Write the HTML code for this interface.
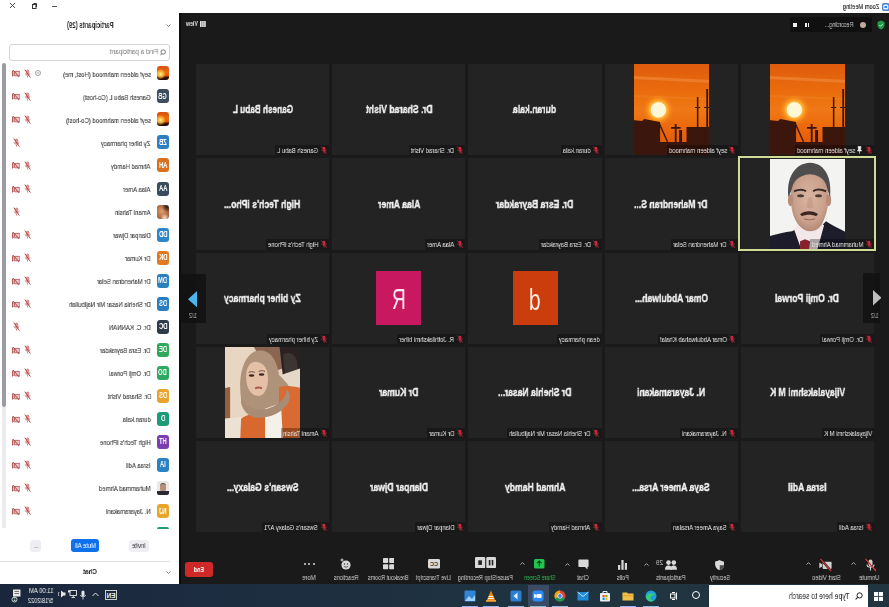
<!DOCTYPE html>
<html><head><meta charset="utf-8"><style>
html,body{margin:0;padding:0;overflow:hidden;}
body{width:889px;height:607px;overflow:hidden;position:relative;background:#fff;font-family:"Liberation Sans",sans-serif;}
#root{position:absolute;left:0;top:0;width:889px;height:607px;overflow:hidden;filter:blur(0.6px);}
#root>div,#root>svg{position:absolute;}
.t{white-space:nowrap;transform-origin:0 0;will-change:transform;}
</style></head><body><div id="root">
<div style="left:0px;top:0px;width:889px;height:13px;background:#fff"></div>
<div style="left:179px;top:13px;width:710px;height:571px;background:#1a1a1a"></div>
<div style="left:179px;top:13px;width:1.5px;height:571px;background:#0e0e0e"></div>
<div style="left:180.5px;top:40px;width:15.5px;height:502px;background:#1a1a1a"></div>
<div style="left:0px;top:13px;width:179px;height:571px;background:#fff"></div>
<div style="left:0px;top:584px;width:889px;height:23px;background:linear-gradient(to right,#1a263c 0,#1c2a40 120px,#1e3140 420px,#20353f 700px,#20353f 889px)"></div>
<div class="t" style="left:842.7px;top:2.73px;width:54.13px;font-size:8px;line-height:8px;color:#222;transform:matrix(-0.7099,0,0,1,36.3,0);-webkit-text-stroke:0.15px #222">Zoom Meeting</div>
<svg style="left:881.5px;top:2.5px;" width="7.5" height="8" viewBox="0 0 7.5 8"><rect x="0" y="0" width="7.5" height="8" rx="2" fill="#4a80d8"/><rect x="1.2" y="1.4" width="5.2" height="5.2" rx="1.5" fill="#e8f2ff"/><rect x="2.4" y="3" width="2.6" height="2" fill="#2d8cff"/></svg>
<svg style="left:10px;top:3px;" width="5" height="5" viewBox="0 0 5 5"><path d="M0 0L5 5M5 0L0 5" stroke="#333" stroke-width="0.9"/></svg>
<svg style="left:31.5px;top:2.5px;" width="5" height="6" viewBox="0 0 5 6"><rect x="0.5" y="1.5" width="3.5" height="4" fill="none" stroke="#333" stroke-width="1"/><path d="M1.5 0.5H4.5V4" fill="none" stroke="#333" stroke-width="1"/></svg>
<div style="left:52px;top:5.5px;width:5px;height:0.9px;background:#555"></div>
<div class="t" style="left:67px;top:21.17px;width:67.58px;font-size:8.3px;line-height:8.3px;color:#2a2a2a;font-weight:700;transform:matrix(-0.7216,0,0,1,46.6,0);">Participants (29)</div>
<svg style="left:166px;top:23.5px;" width="5" height="3" viewBox="0 0 5 3"><path d="M0.5 0.5L2.5 2.5L4.5 0.5" fill="none" stroke="#777" stroke-width="0.9"/></svg>
<div style="left:8.6px;top:43.5px;width:161px;height:17.3px;box-sizing:border-box;border:1px solid #d5d5d8;border-radius:3px;background:#fff"></div>
<svg style="left:159.5px;top:48.5px;" width="6" height="7" viewBox="0 0 6 7"><circle cx="3.2" cy="3" r="2.2" fill="none" stroke="#666" stroke-width="0.9"/><path d="M1.8 4.6L0.5 6.3" stroke="#666" stroke-width="0.9"/></svg>
<div class="t" style="left:109.8px;top:48.03px;width:64.37px;font-size:8px;line-height:8px;color:#777;transform:matrix(-0.7854,0,0,1,48.2,0);">Find a participant</div>
<div style="left:2px;top:407px;width:3.8px;height:121.4px;background:#ececee"></div>
<div style="left:2px;top:62.9px;width:3.8px;height:344.1px;background:#9b9ba2;border-radius:2px"></div>
<div style="left:157px;top:66.4px;width:11.5px;height:14px;border-radius:3px;background:radial-gradient(circle at 30% 58%,#fff0a0 0,#ffc040 18%,rgba(240,120,20,0) 45%),linear-gradient(to bottom,#d8520c 0,#ec6a10 45%,#e05a0c 68%,#3a1206 82%,#2a0e04 100%)"></div>
<div class="t" style="left:62.68px;top:70.93px;width:121.28px;font-size:8px;line-height:8px;color:#444;transform:matrix(-0.7450,0,0,1,88.12,0);-webkit-text-stroke:0.15px #444">seyf aldeen mahmood (Host, me)</div>
<svg style="left:11.8px;top:69.4px;" width="8.5" height="8.5" viewBox="0 0 8.5 8.5"><rect x="2.2" y="2.4" width="5.8" height="4.4" rx="0.5" fill="#eec0c0" stroke="#b45c5c" stroke-width="0.9"/><path d="M0.5 1.5V7.5" stroke="#b45c5c" stroke-width="1"/><path d="M0.9 2.2L2.2 3.4V5.8L0.9 6.8" fill="none" stroke="#b45c5c" stroke-width="0.7"/><path d="M1.2 1.2L7.2 8" stroke="#a04848" stroke-width="1"/></svg>
<svg style="left:23.5px;top:69.1px;" width="7" height="9" viewBox="0 0 7 9"><rect x="2.4" y="1" width="2.4" height="4.6" rx="1.2" fill="#e49a9a" stroke="#c86464" stroke-width="0.6"/><g fill="none" stroke="#c86464" stroke-width="0.8"><path d="M1.2 4.4C1.2 6.8 6 6.8 6 4.4M3.6 6.8V8.6"/><path d="M0.8 0.6L6.4 8.6" stroke="#b44c4c" stroke-width="1"/></g></svg>
<svg style="left:35px;top:70.4px;" width="6" height="6" viewBox="0 0 6 6"><circle cx="3" cy="3" r="2.5" fill="none" stroke="#888" stroke-width="0.8"/><path d="M1.8 3H4.2" stroke="#888" stroke-width="0.8"/></svg>
<div style="left:157px;top:89.42px;width:11.5px;height:14px;border-radius:3px;background:#3c4d5f"></div>
<div class="t" style="left:158.39px;top:92.17px;width:16.2px;font-size:8.8px;line-height:8.8px;color:#fff;font-weight:700;transform:matrix(-0.6600,0,0,1,8.71,0);">GB</div>
<div class="t" style="left:83.11px;top:93.95px;width:93.87px;font-size:8px;line-height:8px;color:#444;transform:matrix(-0.7450,0,0,1,67.69,0);-webkit-text-stroke:0.15px #444">Ganesh Babu L (Co-host)</div>
<svg style="left:11.8px;top:92.42px;" width="8.5" height="8.5" viewBox="0 0 8.5 8.5"><rect x="2.2" y="2.4" width="5.8" height="4.4" rx="0.5" fill="#eec0c0" stroke="#b45c5c" stroke-width="0.9"/><path d="M0.5 1.5V7.5" stroke="#b45c5c" stroke-width="1"/><path d="M0.9 2.2L2.2 3.4V5.8L0.9 6.8" fill="none" stroke="#b45c5c" stroke-width="0.7"/><path d="M1.2 1.2L7.2 8" stroke="#a04848" stroke-width="1"/></svg>
<svg style="left:23.5px;top:92.12px;" width="7" height="9" viewBox="0 0 7 9"><rect x="2.4" y="1" width="2.4" height="4.6" rx="1.2" fill="#e49a9a" stroke="#c86464" stroke-width="0.6"/><g fill="none" stroke="#c86464" stroke-width="0.8"><path d="M1.2 4.4C1.2 6.8 6 6.8 6 4.4M3.6 6.8V8.6"/><path d="M0.8 0.6L6.4 8.6" stroke="#b44c4c" stroke-width="1"/></g></svg>
<div style="left:157px;top:112.44px;width:11.5px;height:14px;border-radius:3px;background:radial-gradient(circle at 30% 58%,#fff0a0 0,#ffc040 18%,rgba(240,120,20,0) 45%),linear-gradient(to bottom,#d8520c 0,#ec6a10 45%,#e05a0c 68%,#3a1206 82%,#2a0e04 100%)"></div>
<div class="t" style="left:65.66px;top:116.97px;width:117.28px;font-size:8px;line-height:8px;color:#444;transform:matrix(-0.7450,0,0,1,85.14,0);-webkit-text-stroke:0.15px #444">seyf aldeen mahmood (Co-host)</div>
<svg style="left:11.8px;top:115.44px;" width="8.5" height="8.5" viewBox="0 0 8.5 8.5"><rect x="2.2" y="2.4" width="5.8" height="4.4" rx="0.5" fill="#eec0c0" stroke="#b45c5c" stroke-width="0.9"/><path d="M0.5 1.5V7.5" stroke="#b45c5c" stroke-width="1"/><path d="M0.9 2.2L2.2 3.4V5.8L0.9 6.8" fill="none" stroke="#b45c5c" stroke-width="0.7"/><path d="M1.2 1.2L7.2 8" stroke="#a04848" stroke-width="1"/></svg>
<svg style="left:23.5px;top:115.14px;" width="7" height="9" viewBox="0 0 7 9"><rect x="2.4" y="1" width="2.4" height="4.6" rx="1.2" fill="#e49a9a" stroke="#c86464" stroke-width="0.6"/><g fill="none" stroke="#c86464" stroke-width="0.8"><path d="M1.2 4.4C1.2 6.8 6 6.8 6 4.4M3.6 6.8V8.6"/><path d="M0.8 0.6L6.4 8.6" stroke="#b44c4c" stroke-width="1"/></g></svg>
<div style="left:157px;top:135.46px;width:11.5px;height:14px;border-radius:3px;background:#2e7fc2"></div>
<div class="t" style="left:158.88px;top:138.21px;width:14.73px;font-size:8.8px;line-height:8.8px;color:#fff;font-weight:700;transform:matrix(-0.6600,0,0,1,7.74,0);">ZB</div>
<div class="t" style="left:101.45px;top:139.99px;width:69.25px;font-size:8px;line-height:8px;color:#444;transform:matrix(-0.7450,0,0,1,49.35,0);-webkit-text-stroke:0.15px #444">Zy biher pharmacy</div>
<svg style="left:13px;top:138.16px;" width="7" height="9" viewBox="0 0 7 9"><rect x="2.4" y="1" width="2.4" height="4.6" rx="1.2" fill="#e49a9a" stroke="#c86464" stroke-width="0.6"/><g fill="none" stroke="#c86464" stroke-width="0.8"><path d="M1.2 4.4C1.2 6.8 6 6.8 6 4.4M3.6 6.8V8.6"/><path d="M0.8 0.6L6.4 8.6" stroke="#b44c4c" stroke-width="1"/></g></svg>
<div style="left:157px;top:158.48px;width:11.5px;height:14px;border-radius:3px;background:#d8701d"></div>
<div class="t" style="left:158.56px;top:161.23px;width:15.71px;font-size:8.8px;line-height:8.8px;color:#fff;font-weight:700;transform:matrix(-0.6600,0,0,1,8.39,0);">AH</div>
<div class="t" style="left:111.38px;top:163.01px;width:55.91px;font-size:8px;line-height:8px;color:#444;transform:matrix(-0.7450,0,0,1,39.42,0);-webkit-text-stroke:0.15px #444">Ahmad Hamdy</div>
<svg style="left:11.8px;top:161.48px;" width="8.5" height="8.5" viewBox="0 0 8.5 8.5"><rect x="2.2" y="2.4" width="5.8" height="4.4" rx="0.5" fill="#eec0c0" stroke="#b45c5c" stroke-width="0.9"/><path d="M0.5 1.5V7.5" stroke="#b45c5c" stroke-width="1"/><path d="M0.9 2.2L2.2 3.4V5.8L0.9 6.8" fill="none" stroke="#b45c5c" stroke-width="0.7"/><path d="M1.2 1.2L7.2 8" stroke="#a04848" stroke-width="1"/></svg>
<svg style="left:23.5px;top:161.18px;" width="7" height="9" viewBox="0 0 7 9"><rect x="2.4" y="1" width="2.4" height="4.6" rx="1.2" fill="#e49a9a" stroke="#c86464" stroke-width="0.6"/><g fill="none" stroke="#c86464" stroke-width="0.8"><path d="M1.2 4.4C1.2 6.8 6 6.8 6 4.4M3.6 6.8V8.6"/><path d="M0.8 0.6L6.4 8.6" stroke="#b44c4c" stroke-width="1"/></g></svg>
<div style="left:157px;top:181.5px;width:11.5px;height:14px;border-radius:3px;background:#3a4b5e"></div>
<div class="t" style="left:158.56px;top:184.25px;width:15.71px;font-size:8.8px;line-height:8.8px;color:#fff;font-weight:700;transform:matrix(-0.6600,0,0,1,8.39,0);">AA</div>
<div class="t" style="left:123.3px;top:186.03px;width:39.91px;font-size:8px;line-height:8px;color:#444;transform:matrix(-0.7450,0,0,1,27.5,0);-webkit-text-stroke:0.15px #444">Alaa Amer</div>
<svg style="left:11.8px;top:184.5px;" width="8.5" height="8.5" viewBox="0 0 8.5 8.5"><rect x="2.2" y="2.4" width="5.8" height="4.4" rx="0.5" fill="#eec0c0" stroke="#b45c5c" stroke-width="0.9"/><path d="M0.5 1.5V7.5" stroke="#b45c5c" stroke-width="1"/><path d="M0.9 2.2L2.2 3.4V5.8L0.9 6.8" fill="none" stroke="#b45c5c" stroke-width="0.7"/><path d="M1.2 1.2L7.2 8" stroke="#a04848" stroke-width="1"/></svg>
<svg style="left:23.5px;top:184.2px;" width="7" height="9" viewBox="0 0 7 9"><rect x="2.4" y="1" width="2.4" height="4.6" rx="1.2" fill="#e49a9a" stroke="#c86464" stroke-width="0.6"/><g fill="none" stroke="#c86464" stroke-width="0.8"><path d="M1.2 4.4C1.2 6.8 6 6.8 6 4.4M3.6 6.8V8.6"/><path d="M0.8 0.6L6.4 8.6" stroke="#b44c4c" stroke-width="1"/></g></svg>
<div style="left:157px;top:204.52px;width:11.5px;height:14px;border-radius:3px;background:radial-gradient(circle at 85% 12%,#2a1810 0,rgba(42,24,16,0) 35%),radial-gradient(circle at 65% 92%,#f8e0c8 0,rgba(248,224,200,0) 30%),radial-gradient(ellipse at 40% 45%,#e0a070 0,#b87248 50%,#8a4a30 100%)"></div>
<div class="t" style="left:115.13px;top:209.05px;width:50.88px;font-size:8px;line-height:8px;color:#444;transform:matrix(-0.7450,0,0,1,35.67,0);-webkit-text-stroke:0.15px #444">Amani Tahsin</div>
<svg style="left:13px;top:207.22px;" width="7" height="9" viewBox="0 0 7 9"><rect x="2.4" y="1" width="2.4" height="4.6" rx="1.2" fill="#e49a9a" stroke="#c86464" stroke-width="0.6"/><g fill="none" stroke="#c86464" stroke-width="0.8"><path d="M1.2 4.4C1.2 6.8 6 6.8 6 4.4M3.6 6.8V8.6"/><path d="M0.8 0.6L6.4 8.6" stroke="#b44c4c" stroke-width="1"/></g></svg>
<div style="left:157px;top:227.54px;width:11.5px;height:14px;border-radius:3px;background:#2d86c8"></div>
<div class="t" style="left:158.56px;top:230.29px;width:15.71px;font-size:8.8px;line-height:8.8px;color:#fff;font-weight:700;transform:matrix(-0.6600,0,0,1,8.39,0);">DD</div>
<div class="t" style="left:113.04px;top:232.07px;width:53.69px;font-size:8px;line-height:8px;color:#444;transform:matrix(-0.7450,0,0,1,37.76,0);-webkit-text-stroke:0.15px #444">Dlanpar Djwar</div>
<svg style="left:11.8px;top:230.54px;" width="8.5" height="8.5" viewBox="0 0 8.5 8.5"><rect x="2.2" y="2.4" width="5.8" height="4.4" rx="0.5" fill="#eec0c0" stroke="#b45c5c" stroke-width="0.9"/><path d="M0.5 1.5V7.5" stroke="#b45c5c" stroke-width="1"/><path d="M0.9 2.2L2.2 3.4V5.8L0.9 6.8" fill="none" stroke="#b45c5c" stroke-width="0.7"/><path d="M1.2 1.2L7.2 8" stroke="#a04848" stroke-width="1"/></svg>
<svg style="left:23.5px;top:230.24px;" width="7" height="9" viewBox="0 0 7 9"><rect x="2.4" y="1" width="2.4" height="4.6" rx="1.2" fill="#e49a9a" stroke="#c86464" stroke-width="0.6"/><g fill="none" stroke="#c86464" stroke-width="0.8"><path d="M1.2 4.4C1.2 6.8 6 6.8 6 4.4M3.6 6.8V8.6"/><path d="M0.8 0.6L6.4 8.6" stroke="#b44c4c" stroke-width="1"/></g></svg>
<div style="left:157px;top:250.56px;width:11.5px;height:14px;border-radius:3px;background:#df7a20"></div>
<div class="t" style="left:158.56px;top:253.31px;width:15.71px;font-size:8.8px;line-height:8.8px;color:#fff;font-weight:700;transform:matrix(-0.6600,0,0,1,8.39,0);">DK</div>
<div class="t" style="left:125.3px;top:255.09px;width:37.23px;font-size:8px;line-height:8px;color:#444;transform:matrix(-0.7450,0,0,1,25.5,0);-webkit-text-stroke:0.15px #444">Dr Kumar</div>
<svg style="left:11.8px;top:253.56px;" width="8.5" height="8.5" viewBox="0 0 8.5 8.5"><rect x="2.2" y="2.4" width="5.8" height="4.4" rx="0.5" fill="#eec0c0" stroke="#b45c5c" stroke-width="0.9"/><path d="M0.5 1.5V7.5" stroke="#b45c5c" stroke-width="1"/><path d="M0.9 2.2L2.2 3.4V5.8L0.9 6.8" fill="none" stroke="#b45c5c" stroke-width="0.7"/><path d="M1.2 1.2L7.2 8" stroke="#a04848" stroke-width="1"/></svg>
<svg style="left:23.5px;top:253.26px;" width="7" height="9" viewBox="0 0 7 9"><rect x="2.4" y="1" width="2.4" height="4.6" rx="1.2" fill="#e49a9a" stroke="#c86464" stroke-width="0.6"/><g fill="none" stroke="#c86464" stroke-width="0.8"><path d="M1.2 4.4C1.2 6.8 6 6.8 6 4.4M3.6 6.8V8.6"/><path d="M0.8 0.6L6.4 8.6" stroke="#b44c4c" stroke-width="1"/></g></svg>
<div style="left:157px;top:273.58px;width:11.5px;height:14px;border-radius:3px;background:#2b80c0"></div>
<div class="t" style="left:158.23px;top:276.33px;width:16.69px;font-size:8.8px;line-height:8.8px;color:#fff;font-weight:700;transform:matrix(-0.6600,0,0,1,9.03,0);">DM</div>
<div class="t" style="left:97.13px;top:278.11px;width:75.04px;font-size:8px;line-height:8px;color:#444;transform:matrix(-0.7450,0,0,1,53.67,0);-webkit-text-stroke:0.15px #444">Dr Mahendran Selar</div>
<svg style="left:11.8px;top:276.58px;" width="8.5" height="8.5" viewBox="0 0 8.5 8.5"><rect x="2.2" y="2.4" width="5.8" height="4.4" rx="0.5" fill="#eec0c0" stroke="#b45c5c" stroke-width="0.9"/><path d="M0.5 1.5V7.5" stroke="#b45c5c" stroke-width="1"/><path d="M0.9 2.2L2.2 3.4V5.8L0.9 6.8" fill="none" stroke="#b45c5c" stroke-width="0.7"/><path d="M1.2 1.2L7.2 8" stroke="#a04848" stroke-width="1"/></svg>
<svg style="left:23.5px;top:276.28px;" width="7" height="9" viewBox="0 0 7 9"><rect x="2.4" y="1" width="2.4" height="4.6" rx="1.2" fill="#e49a9a" stroke="#c86464" stroke-width="0.6"/><g fill="none" stroke="#c86464" stroke-width="0.8"><path d="M1.2 4.4C1.2 6.8 6 6.8 6 4.4M3.6 6.8V8.6"/><path d="M0.8 0.6L6.4 8.6" stroke="#b44c4c" stroke-width="1"/></g></svg>
<div style="left:157px;top:296.6px;width:11.5px;height:14px;border-radius:3px;background:#2a7ebf"></div>
<div class="t" style="left:158.72px;top:299.35px;width:15.23px;font-size:8.8px;line-height:8.8px;color:#fff;font-weight:700;transform:matrix(-0.6600,0,0,1,8.07,0);">DS</div>
<div class="t" style="left:68.98px;top:301.13px;width:112.82px;font-size:8px;line-height:8px;color:#444;transform:matrix(-0.7450,0,0,1,81.82,0);-webkit-text-stroke:0.15px #444">Dr Shehla Nasar Mir Najibullah</div>
<svg style="left:11.8px;top:299.6px;" width="8.5" height="8.5" viewBox="0 0 8.5 8.5"><rect x="2.2" y="2.4" width="5.8" height="4.4" rx="0.5" fill="#eec0c0" stroke="#b45c5c" stroke-width="0.9"/><path d="M0.5 1.5V7.5" stroke="#b45c5c" stroke-width="1"/><path d="M0.9 2.2L2.2 3.4V5.8L0.9 6.8" fill="none" stroke="#b45c5c" stroke-width="0.7"/><path d="M1.2 1.2L7.2 8" stroke="#a04848" stroke-width="1"/></svg>
<svg style="left:23.5px;top:299.3px;" width="7" height="9" viewBox="0 0 7 9"><rect x="2.4" y="1" width="2.4" height="4.6" rx="1.2" fill="#e49a9a" stroke="#c86464" stroke-width="0.6"/><g fill="none" stroke="#c86464" stroke-width="0.8"><path d="M1.2 4.4C1.2 6.8 6 6.8 6 4.4M3.6 6.8V8.6"/><path d="M0.8 0.6L6.4 8.6" stroke="#b44c4c" stroke-width="1"/></g></svg>
<div style="left:157px;top:319.62px;width:11.5px;height:14px;border-radius:3px;background:#2f3b49"></div>
<div class="t" style="left:158.56px;top:322.37px;width:15.71px;font-size:8.8px;line-height:8.8px;color:#fff;font-weight:700;transform:matrix(-0.6600,0,0,1,8.39,0);">DC</div>
<div class="t" style="left:109.07px;top:324.15px;width:59.01px;font-size:8px;line-height:8px;color:#444;transform:matrix(-0.7450,0,0,1,41.73,0);-webkit-text-stroke:0.15px #444">Dr. C. KANNAN</div>
<svg style="left:13px;top:322.32px;" width="7" height="9" viewBox="0 0 7 9"><rect x="2.4" y="1" width="2.4" height="4.6" rx="1.2" fill="#e49a9a" stroke="#c86464" stroke-width="0.6"/><g fill="none" stroke="#c86464" stroke-width="0.8"><path d="M1.2 4.4C1.2 6.8 6 6.8 6 4.4M3.6 6.8V8.6"/><path d="M0.8 0.6L6.4 8.6" stroke="#b44c4c" stroke-width="1"/></g></svg>
<div style="left:157px;top:342.64px;width:11.5px;height:14px;border-radius:3px;background:#2fa85b"></div>
<div class="t" style="left:158.72px;top:345.39px;width:15.23px;font-size:8.8px;line-height:8.8px;color:#fff;font-weight:700;transform:matrix(-0.6600,0,0,1,8.07,0);">DE</div>
<div class="t" style="left:100.45px;top:347.17px;width:70.58px;font-size:8px;line-height:8px;color:#444;transform:matrix(-0.7450,0,0,1,50.35,0);-webkit-text-stroke:0.15px #444">Dr. Esra Bayrakdar</div>
<svg style="left:11.8px;top:345.64px;" width="8.5" height="8.5" viewBox="0 0 8.5 8.5"><rect x="2.2" y="2.4" width="5.8" height="4.4" rx="0.5" fill="#eec0c0" stroke="#b45c5c" stroke-width="0.9"/><path d="M0.5 1.5V7.5" stroke="#b45c5c" stroke-width="1"/><path d="M0.9 2.2L2.2 3.4V5.8L0.9 6.8" fill="none" stroke="#b45c5c" stroke-width="0.7"/><path d="M1.2 1.2L7.2 8" stroke="#a04848" stroke-width="1"/></svg>
<svg style="left:23.5px;top:345.34px;" width="7" height="9" viewBox="0 0 7 9"><rect x="2.4" y="1" width="2.4" height="4.6" rx="1.2" fill="#e49a9a" stroke="#c86464" stroke-width="0.6"/><g fill="none" stroke="#c86464" stroke-width="0.8"><path d="M1.2 4.4C1.2 6.8 6 6.8 6 4.4M3.6 6.8V8.6"/><path d="M0.8 0.6L6.4 8.6" stroke="#b44c4c" stroke-width="1"/></g></svg>
<div style="left:157px;top:365.66px;width:11.5px;height:14px;border-radius:3px;background:#2fa95f"></div>
<div class="t" style="left:158.39px;top:368.41px;width:16.2px;font-size:8.8px;line-height:8.8px;color:#fff;font-weight:700;transform:matrix(-0.6600,0,0,1,8.71,0);">DO</div>
<div class="t" style="left:109.4px;top:370.19px;width:58.56px;font-size:8px;line-height:8px;color:#444;transform:matrix(-0.7450,0,0,1,41.4,0);-webkit-text-stroke:0.15px #444">Dr. Omji Porwal</div>
<svg style="left:11.8px;top:368.66px;" width="8.5" height="8.5" viewBox="0 0 8.5 8.5"><rect x="2.2" y="2.4" width="5.8" height="4.4" rx="0.5" fill="#eec0c0" stroke="#b45c5c" stroke-width="0.9"/><path d="M0.5 1.5V7.5" stroke="#b45c5c" stroke-width="1"/><path d="M0.9 2.2L2.2 3.4V5.8L0.9 6.8" fill="none" stroke="#b45c5c" stroke-width="0.7"/><path d="M1.2 1.2L7.2 8" stroke="#a04848" stroke-width="1"/></svg>
<svg style="left:23.5px;top:368.36px;" width="7" height="9" viewBox="0 0 7 9"><rect x="2.4" y="1" width="2.4" height="4.6" rx="1.2" fill="#e49a9a" stroke="#c86464" stroke-width="0.6"/><g fill="none" stroke="#c86464" stroke-width="0.8"><path d="M1.2 4.4C1.2 6.8 6 6.8 6 4.4M3.6 6.8V8.6"/><path d="M0.8 0.6L6.4 8.6" stroke="#b44c4c" stroke-width="1"/></g></svg>
<div style="left:157px;top:388.68px;width:11.5px;height:14px;border-radius:3px;background:#e8a52b"></div>
<div class="t" style="left:158.72px;top:391.43px;width:15.23px;font-size:8.8px;line-height:8.8px;color:#fff;font-weight:700;transform:matrix(-0.6600,0,0,1,8.07,0);">DS</div>
<div class="t" style="left:107.51px;top:393.21px;width:61.11px;font-size:8px;line-height:8px;color:#444;transform:matrix(-0.7450,0,0,1,43.29,0);-webkit-text-stroke:0.15px #444">Dr. Sharad Visht</div>
<svg style="left:11.8px;top:391.68px;" width="8.5" height="8.5" viewBox="0 0 8.5 8.5"><rect x="2.2" y="2.4" width="5.8" height="4.4" rx="0.5" fill="#eec0c0" stroke="#b45c5c" stroke-width="0.9"/><path d="M0.5 1.5V7.5" stroke="#b45c5c" stroke-width="1"/><path d="M0.9 2.2L2.2 3.4V5.8L0.9 6.8" fill="none" stroke="#b45c5c" stroke-width="0.7"/><path d="M1.2 1.2L7.2 8" stroke="#a04848" stroke-width="1"/></svg>
<svg style="left:23.5px;top:391.38px;" width="7" height="9" viewBox="0 0 7 9"><rect x="2.4" y="1" width="2.4" height="4.6" rx="1.2" fill="#e49a9a" stroke="#c86464" stroke-width="0.6"/><g fill="none" stroke="#c86464" stroke-width="0.8"><path d="M1.2 4.4C1.2 6.8 6 6.8 6 4.4M3.6 6.8V8.6"/><path d="M0.8 0.6L6.4 8.6" stroke="#b44c4c" stroke-width="1"/></g></svg>
<div style="left:157px;top:411.7px;width:11.5px;height:14px;border-radius:3px;background:#1e9b79"></div>
<div class="t" style="left:160.65px;top:414.45px;width:9.36px;font-size:8.8px;line-height:8.8px;color:#fff;font-weight:700;transform:matrix(-0.6600,0,0,1,4.19,0);">D</div>
<div class="t" style="left:122.97px;top:416.23px;width:40.36px;font-size:8px;line-height:8px;color:#444;transform:matrix(-0.7450,0,0,1,27.83,0);-webkit-text-stroke:0.15px #444">duran.kala</div>
<svg style="left:11.8px;top:414.7px;" width="8.5" height="8.5" viewBox="0 0 8.5 8.5"><rect x="2.2" y="2.4" width="5.8" height="4.4" rx="0.5" fill="#eec0c0" stroke="#b45c5c" stroke-width="0.9"/><path d="M0.5 1.5V7.5" stroke="#b45c5c" stroke-width="1"/><path d="M0.9 2.2L2.2 3.4V5.8L0.9 6.8" fill="none" stroke="#b45c5c" stroke-width="0.7"/><path d="M1.2 1.2L7.2 8" stroke="#a04848" stroke-width="1"/></svg>
<svg style="left:23.5px;top:414.4px;" width="7" height="9" viewBox="0 0 7 9"><rect x="2.4" y="1" width="2.4" height="4.6" rx="1.2" fill="#e49a9a" stroke="#c86464" stroke-width="0.6"/><g fill="none" stroke="#c86464" stroke-width="0.8"><path d="M1.2 4.4C1.2 6.8 6 6.8 6 4.4M3.6 6.8V8.6"/><path d="M0.8 0.6L6.4 8.6" stroke="#b44c4c" stroke-width="1"/></g></svg>
<div style="left:157px;top:434.72px;width:11.5px;height:14px;border-radius:3px;background:#7a3eaf"></div>
<div class="t" style="left:158.88px;top:437.47px;width:14.73px;font-size:8.8px;line-height:8.8px;color:#fff;font-weight:700;transform:matrix(-0.6600,0,0,1,7.74,0);">HT</div>
<div class="t" style="left:100.07px;top:439.25px;width:71.09px;font-size:8px;line-height:8px;color:#444;transform:matrix(-0.7450,0,0,1,50.73,0);-webkit-text-stroke:0.15px #444">High Tech's iPhone</div>
<svg style="left:11.8px;top:437.72px;" width="8.5" height="8.5" viewBox="0 0 8.5 8.5"><rect x="2.2" y="2.4" width="5.8" height="4.4" rx="0.5" fill="#eec0c0" stroke="#b45c5c" stroke-width="0.9"/><path d="M0.5 1.5V7.5" stroke="#b45c5c" stroke-width="1"/><path d="M0.9 2.2L2.2 3.4V5.8L0.9 6.8" fill="none" stroke="#b45c5c" stroke-width="0.7"/><path d="M1.2 1.2L7.2 8" stroke="#a04848" stroke-width="1"/></svg>
<svg style="left:23.5px;top:437.42px;" width="7" height="9" viewBox="0 0 7 9"><rect x="2.4" y="1" width="2.4" height="4.6" rx="1.2" fill="#e49a9a" stroke="#c86464" stroke-width="0.6"/><g fill="none" stroke="#c86464" stroke-width="0.8"><path d="M1.2 4.4C1.2 6.8 6 6.8 6 4.4M3.6 6.8V8.6"/><path d="M0.8 0.6L6.4 8.6" stroke="#b44c4c" stroke-width="1"/></g></svg>
<div style="left:157px;top:457.74px;width:11.5px;height:14px;border-radius:3px;background:#2b81c1"></div>
<div class="t" style="left:159.85px;top:460.49px;width:11.8px;font-size:8.8px;line-height:8.8px;color:#fff;font-weight:700;transform:matrix(-0.6600,0,0,1,5.81,0);">IA</div>
<div class="t" style="left:126.28px;top:462.27px;width:35.91px;font-size:8px;line-height:8px;color:#444;transform:matrix(-0.7450,0,0,1,24.52,0);-webkit-text-stroke:0.15px #444">Israa Adil</div>
<svg style="left:11.8px;top:460.74px;" width="8.5" height="8.5" viewBox="0 0 8.5 8.5"><rect x="2.2" y="2.4" width="5.8" height="4.4" rx="0.5" fill="#eec0c0" stroke="#b45c5c" stroke-width="0.9"/><path d="M0.5 1.5V7.5" stroke="#b45c5c" stroke-width="1"/><path d="M0.9 2.2L2.2 3.4V5.8L0.9 6.8" fill="none" stroke="#b45c5c" stroke-width="0.7"/><path d="M1.2 1.2L7.2 8" stroke="#a04848" stroke-width="1"/></svg>
<svg style="left:23.5px;top:460.44px;" width="7" height="9" viewBox="0 0 7 9"><rect x="2.4" y="1" width="2.4" height="4.6" rx="1.2" fill="#e49a9a" stroke="#c86464" stroke-width="0.6"/><g fill="none" stroke="#c86464" stroke-width="0.8"><path d="M1.2 4.4C1.2 6.8 6 6.8 6 4.4M3.6 6.8V8.6"/><path d="M0.8 0.6L6.4 8.6" stroke="#b44c4c" stroke-width="1"/></g></svg>
<div style="left:157px;top:480.76px;width:11.5px;height:14px;border-radius:2px;background:#e8e8e8;overflow:hidden"><div style="position:absolute;left:3px;top:2px;width:6px;height:8px;border-radius:3px;background:#b98f78;border-top:1.5px solid #555"></div><div style="position:absolute;left:0;top:10px;width:11.5px;height:4px;background:#2a2a36"></div></div>
<div class="t" style="left:99.12px;top:485.29px;width:72.37px;font-size:8px;line-height:8px;color:#444;transform:matrix(-0.7450,0,0,1,51.68,0);-webkit-text-stroke:0.15px #444">Muhammad Ahmed</div>
<svg style="left:11.8px;top:483.76px;" width="8.5" height="8.5" viewBox="0 0 8.5 8.5"><rect x="2.2" y="2.4" width="5.8" height="4.4" rx="0.5" fill="#eec0c0" stroke="#b45c5c" stroke-width="0.9"/><path d="M0.5 1.5V7.5" stroke="#b45c5c" stroke-width="1"/><path d="M0.9 2.2L2.2 3.4V5.8L0.9 6.8" fill="none" stroke="#b45c5c" stroke-width="0.7"/><path d="M1.2 1.2L7.2 8" stroke="#a04848" stroke-width="1"/></svg>
<svg style="left:23.5px;top:483.46px;" width="7" height="9" viewBox="0 0 7 9"><rect x="2.4" y="1" width="2.4" height="4.6" rx="1.2" fill="#e49a9a" stroke="#c86464" stroke-width="0.6"/><g fill="none" stroke="#c86464" stroke-width="0.8"><path d="M1.2 4.4C1.2 6.8 6 6.8 6 4.4M3.6 6.8V8.6"/><path d="M0.8 0.6L6.4 8.6" stroke="#b44c4c" stroke-width="1"/></g></svg>
<div style="left:157px;top:503.78px;width:11.5px;height:14px;border-radius:3px;background:#e8a52b"></div>
<div class="t" style="left:159.04px;top:506.53px;width:14.25px;font-size:8.8px;line-height:8.8px;color:#fff;font-weight:700;transform:matrix(-0.6600,0,0,1,7.42,0);">NJ</div>
<div class="t" style="left:106.08px;top:508.31px;width:63.02px;font-size:8px;line-height:8px;color:#444;transform:matrix(-0.7450,0,0,1,44.72,0);-webkit-text-stroke:0.15px #444">N. Jayaramakani</div>
<svg style="left:11.8px;top:506.78px;" width="8.5" height="8.5" viewBox="0 0 8.5 8.5"><rect x="2.2" y="2.4" width="5.8" height="4.4" rx="0.5" fill="#eec0c0" stroke="#b45c5c" stroke-width="0.9"/><path d="M0.5 1.5V7.5" stroke="#b45c5c" stroke-width="1"/><path d="M0.9 2.2L2.2 3.4V5.8L0.9 6.8" fill="none" stroke="#b45c5c" stroke-width="0.7"/><path d="M1.2 1.2L7.2 8" stroke="#a04848" stroke-width="1"/></svg>
<svg style="left:23.5px;top:506.48px;" width="7" height="9" viewBox="0 0 7 9"><rect x="2.4" y="1" width="2.4" height="4.6" rx="1.2" fill="#e49a9a" stroke="#c86464" stroke-width="0.6"/><g fill="none" stroke="#c86464" stroke-width="0.8"><path d="M1.2 4.4C1.2 6.8 6 6.8 6 4.4M3.6 6.8V8.6"/><path d="M0.8 0.6L6.4 8.6" stroke="#b44c4c" stroke-width="1"/></g></svg>
<div style="left:157px;top:527px;width:11.5px;height:1.5px;background:#1e9b79;border-radius:3px 3px 0 0"></div>
<div style="left:30.4px;top:539.5px;width:11.1px;height:12.2px;background:#eeeef2;border-radius:3px"></div>
<div class="t" style="left:33.67px;top:542.07px;width:8.83px;font-size:7px;line-height:7px;color:#555;transform:matrix(-0.8000,0,0,1,4.67,0);">...</div>
<div style="left:70.9px;top:539px;width:28.3px;height:12.7px;background:#0e71eb;border-radius:3px"></div>
<div class="t" style="left:74.5px;top:542.27px;width:27.9px;font-size:7px;line-height:7px;color:#fff;transform:matrix(-0.8433,0,0,1,21,0);">Mute All</div>
<div style="left:128.6px;top:539.5px;width:20.8px;height:12.2px;background:#efeff3;border-radius:3px"></div>
<div class="t" style="left:132.25px;top:542.27px;width:19.73px;font-size:7px;line-height:7px;color:#333;transform:matrix(-0.8069,0,0,1,13.5,0);">Invite</div>
<div style="left:0px;top:560.5px;width:170px;height:0.8px;background:#e3e3e6"></div>
<div class="t" style="left:83px;top:568.23px;width:20.78px;font-size:8px;line-height:8px;color:#222;font-weight:700;transform:matrix(-0.7875,0,0,1,14,0);">Chat</div>
<svg style="left:165.5px;top:570.5px;" width="5" height="3" viewBox="0 0 5 3"><path d="M0.5 0.5L2.5 2.5L4.5 0.5" fill="none" stroke="#777" stroke-width="0.9"/></svg>
<div class="t" style="left:185.8px;top:21.24px;width:18.37px;font-size:6.8px;line-height:6.8px;color:#e0e0e0;font-weight:700;transform:matrix(-0.7806,0,0,1,12,0);">View</div>
<svg style="left:199.8px;top:21px;" width="5.8" height="6" viewBox="0 0 5.8 6"><g fill="#e6e6e6"><rect x="0" y="0" width="1.6" height="6"/><rect x="2.1" y="0" width="1.6" height="6"/><rect x="4.2" y="0" width="1.6" height="6"/></g></svg>
<div style="left:789.8px;top:17.4px;width:82px;height:14.2px;background:#101010"></div>
<div style="left:793px;top:22.5px;width:4px;height:4.2px;background:#eee"></div>
<div style="left:805px;top:22.5px;width:1.5px;height:4.2px;background:#eee"></div>
<div style="left:807.6px;top:22.5px;width:1.5px;height:4.2px;background:#eee"></div>
<div class="t" style="left:824.6px;top:21.15px;width:43.44px;font-size:7.5px;line-height:7.5px;color:#ccc;transform:matrix(-0.7023,0,0,1,28.4,0);">Recording...</div>
<div style="left:859.5px;top:21.8px;width:6px;height:6px;border-radius:50%;background:#bfa8a0"></div>
<svg style="left:876.5px;top:19.5px;" width="8" height="10" viewBox="0 0 8 10"><path d="M4 0.5L7.5 2V5C7.5 7.5 5.5 9 4 9.5C2.5 9 0.5 7.5 0.5 5V2Z" fill="#1f9c45"/><path d="M2.3 5L3.6 6.3L5.9 3.8" fill="none" stroke="#bff5c8" stroke-width="0.9"/></svg>
<div style="left:196px;top:64px;width:133.2px;height:91.3px;background:#232323"></div>
<div class="t" style="left:232.55px;top:104.34px;width:83.68px;font-size:11px;line-height:11px;color:#f2f2f2;font-weight:700;transform:matrix(-0.7450,0,0,1,60.11,0);-webkit-text-stroke:0.35px #f2f2f2">Ganesh Babu L</div>
<div style="left:275.06px;top:145px;width:54.14px;height:10.3px;background:rgba(0,0,0,0.3)"></div>
<svg style="left:320.7px;top:146.1px;" width="6" height="8" viewBox="0 0 6 8"><rect x="1.8" y="0.8" width="2.6" height="4.4" rx="1.3" fill="#c42c3c"/><g fill="none" stroke="#b82838" stroke-width="1"><path d="M0.8 3.6C0.8 6 5.2 6 5.2 3.6M3 6V7.6"/><path d="M0.5 0.6L5.5 7.6"/></g></svg>
<div class="t" style="left:277.06px;top:147.03px;width:58.6px;font-size:8px;line-height:8px;color:#e6e6e6;transform:matrix(-0.7400,0,0,1,41.14,0);">Ganesh Babu L</div>
<div style="left:332.2px;top:64px;width:133.2px;height:91.3px;background:#232323"></div>
<div class="t" style="left:365.53px;top:104.34px;width:87.77px;font-size:11px;line-height:11px;color:#f2f2f2;font-weight:700;transform:matrix(-0.7850,0,0,1,66.55,0);-webkit-text-stroke:0.35px #f2f2f2">Dr. Sharad Visht</div>
<div style="left:409.4px;top:145px;width:56px;height:10.3px;background:rgba(0,0,0,0.3)"></div>
<svg style="left:456.9px;top:146.1px;" width="6" height="8" viewBox="0 0 6 8"><rect x="1.8" y="0.8" width="2.6" height="4.4" rx="1.3" fill="#c42c3c"/><g fill="none" stroke="#b82838" stroke-width="1"><path d="M0.8 3.6C0.8 6 5.2 6 5.2 3.6M3 6V7.6"/><path d="M0.5 0.6L5.5 7.6"/></g></svg>
<div class="t" style="left:411.4px;top:147.03px;width:61.11px;font-size:8px;line-height:8px;color:#e6e6e6;transform:matrix(-0.7400,0,0,1,43,0);">Dr. Sharad Visht</div>
<div style="left:468.4px;top:64px;width:133.2px;height:91.3px;background:#232323"></div>
<div class="t" style="left:513.4px;top:104.34px;width:58.02px;font-size:11px;line-height:11px;color:#f2f2f2;font-weight:700;transform:matrix(-0.7850,0,0,1,43.19,0);-webkit-text-stroke:0.35px #f2f2f2">duran.kala</div>
<div style="left:560.95px;top:145px;width:40.65px;height:10.3px;background:rgba(0,0,0,0.3)"></div>
<svg style="left:593.1px;top:146.1px;" width="6" height="8" viewBox="0 0 6 8"><rect x="1.8" y="0.8" width="2.6" height="4.4" rx="1.3" fill="#c42c3c"/><g fill="none" stroke="#b82838" stroke-width="1"><path d="M0.8 3.6C0.8 6 5.2 6 5.2 3.6M3 6V7.6"/><path d="M0.5 0.6L5.5 7.6"/></g></svg>
<div class="t" style="left:562.95px;top:147.03px;width:40.36px;font-size:8px;line-height:8px;color:#e6e6e6;transform:matrix(-0.7400,0,0,1,27.65,0);">duran.kala</div>
<div style="left:604.6px;top:64px;width:133.2px;height:91.3px;background:#232323"></div>
<svg style="left:633.6px;top:64px;" width="75.2" height="91" viewBox="0 0 75 91"><defs><linearGradient id="sg1" x1="0" y1="0" x2="0" y2="1"><stop offset="0" stop-color="#dc5a0e"/><stop offset="0.25" stop-color="#e8680f"/><stop offset="0.5" stop-color="#f07812"/><stop offset="0.75" stop-color="#e96410"/><stop offset="1" stop-color="#d2520c"/></linearGradient><radialGradient id="sr1"><stop offset="0" stop-color="#fffbe0"/><stop offset="0.4" stop-color="#ffe070"/><stop offset="0.65" stop-color="#ffa020" stop-opacity="0.75"/><stop offset="1" stop-color="#f07812" stop-opacity="0"/></radialGradient><filter id="sb1" x="-10%" y="-10%" width="120%" height="120%"><feGaussianBlur stdDeviation="0.5"/></filter></defs><g filter="url(#sb1)"><rect x="-3" y="-3" width="81" height="97" fill="url(#sg1)"/><path d="M-3 12L78 16V19L-3 15Z" fill="#f39040" opacity="0.55"/><path d="M-3 31L78 34V36L-3 33Z" fill="#f08a30" opacity="0.3"/><circle cx="24.3" cy="45.8" r="16" fill="url(#sr1)"/><circle cx="24.3" cy="45.8" r="7.6" fill="#fff8d8"/><g fill="#3a1409"><path d="M-3 56L8 57L10 55L26 58V94H-3Z"/><path d="M25.5 58.5L34 77.5L33 78.5L24.5 60Z"/><path d="M-3 78H78V94H-3Z"/><path d="M40.7 60H42.5V63H46.5V64.8H42.5V80H40.7V64.8H37V63H40.7Z"/><rect x="45" y="66" width="3" height="13"/><path d="M52.4 63H78V94H52.4Z"/><rect x="62.8" y="33" width="1.5" height="31"/><rect x="61" y="43" width="5" height="1"/><rect x="72.2" y="25" width="1.8" height="40"/><rect x="70" y="43" width="6" height="1"/></g></g></svg>
<div style="left:666.55px;top:145px;width:71.25px;height:10.3px;background:rgba(0,0,0,0.3)"></div>
<svg style="left:729.3px;top:146.1px;" width="6" height="8" viewBox="0 0 6 8"><rect x="1.8" y="0.8" width="2.6" height="4.4" rx="1.3" fill="#c42c3c"/><g fill="none" stroke="#b82838" stroke-width="1"><path d="M0.8 3.6C0.8 6 5.2 6 5.2 3.6M3 6V7.6"/><path d="M0.5 0.6L5.5 7.6"/></g></svg>
<div class="t" style="left:668.55px;top:147.03px;width:81.72px;font-size:8px;line-height:8px;color:#e6e6e6;transform:matrix(-0.7400,0,0,1,58.25,0);">seyf aldeen mahmood</div>
<div style="left:740.8px;top:64px;width:133.2px;height:91.3px;background:#232323"></div>
<svg style="left:769.8px;top:64px;" width="75.2" height="91" viewBox="0 0 75 91"><defs><linearGradient id="sg2" x1="0" y1="0" x2="0" y2="1"><stop offset="0" stop-color="#dc5a0e"/><stop offset="0.25" stop-color="#e8680f"/><stop offset="0.5" stop-color="#f07812"/><stop offset="0.75" stop-color="#e96410"/><stop offset="1" stop-color="#d2520c"/></linearGradient><radialGradient id="sr2"><stop offset="0" stop-color="#fffbe0"/><stop offset="0.4" stop-color="#ffe070"/><stop offset="0.65" stop-color="#ffa020" stop-opacity="0.75"/><stop offset="1" stop-color="#f07812" stop-opacity="0"/></radialGradient><filter id="sb2" x="-10%" y="-10%" width="120%" height="120%"><feGaussianBlur stdDeviation="0.5"/></filter></defs><g filter="url(#sb2)"><rect x="-3" y="-3" width="81" height="97" fill="url(#sg2)"/><path d="M-3 12L78 16V19L-3 15Z" fill="#f39040" opacity="0.55"/><path d="M-3 31L78 34V36L-3 33Z" fill="#f08a30" opacity="0.3"/><circle cx="24.3" cy="45.8" r="16" fill="url(#sr2)"/><circle cx="24.3" cy="45.8" r="7.6" fill="#fff8d8"/><g fill="#3a1409"><path d="M-3 56L8 57L10 55L26 58V94H-3Z"/><path d="M25.5 58.5L34 77.5L33 78.5L24.5 60Z"/><path d="M-3 78H78V94H-3Z"/><path d="M40.7 60H42.5V63H46.5V64.8H42.5V80H40.7V64.8H37V63H40.7Z"/><rect x="45" y="66" width="3" height="13"/><path d="M52.4 63H78V94H52.4Z"/><rect x="62.8" y="33" width="1.5" height="31"/><rect x="61" y="43" width="5" height="1"/><rect x="72.2" y="25" width="1.8" height="40"/><rect x="70" y="43" width="6" height="1"/></g></g></svg>
<div style="left:794.75px;top:145px;width:79.25px;height:10.3px;background:rgba(0,0,0,0.3)"></div>
<svg style="left:865.5px;top:146.1px;" width="6" height="8" viewBox="0 0 6 8"><rect x="1.8" y="0.8" width="2.6" height="4.4" rx="1.3" fill="#c42c3c"/><g fill="none" stroke="#b82838" stroke-width="1"><path d="M0.8 3.6C0.8 6 5.2 6 5.2 3.6M3 6V7.6"/><path d="M0.5 0.6L5.5 7.6"/></g></svg>
<svg style="left:857px;top:146.3px;" width="5" height="8" viewBox="0 0 5 8"><path d="M1 0.5H4L3.6 3.5L4.6 5H0.4L1.4 3.5Z M2.5 5V7.8" fill="#eee" stroke="#eee" stroke-width="0.6"/></svg>
<div class="t" style="left:796.75px;top:147.03px;width:81.72px;font-size:8px;line-height:8px;color:#e6e6e6;transform:matrix(-0.7400,0,0,1,58.25,0);">seyf aldeen mahmood</div>
<div style="left:196px;top:158.3px;width:133.2px;height:91.3px;background:#232323"></div>
<div class="t" style="left:224.47px;top:198.64px;width:100.14px;font-size:11px;line-height:11px;color:#f2f2f2;font-weight:700;transform:matrix(-0.7850,0,0,1,76.26,0);-webkit-text-stroke:0.35px #f2f2f2">High Tech's iPho...</div>
<div style="left:265.81px;top:239.3px;width:63.39px;height:10.3px;background:rgba(0,0,0,0.3)"></div>
<svg style="left:320.7px;top:240.4px;" width="6" height="8" viewBox="0 0 6 8"><rect x="1.8" y="0.8" width="2.6" height="4.4" rx="1.3" fill="#c42c3c"/><g fill="none" stroke="#b82838" stroke-width="1"><path d="M0.8 3.6C0.8 6 5.2 6 5.2 3.6M3 6V7.6"/><path d="M0.5 0.6L5.5 7.6"/></g></svg>
<div class="t" style="left:267.81px;top:241.33px;width:71.09px;font-size:8px;line-height:8px;color:#e6e6e6;transform:matrix(-0.7400,0,0,1,50.39,0);">High Tech's iPhone</div>
<div style="left:332.2px;top:158.3px;width:133.2px;height:91.3px;background:#232323"></div>
<div class="t" style="left:377.6px;top:198.64px;width:57.01px;font-size:11px;line-height:11px;color:#f2f2f2;font-weight:700;transform:matrix(-0.7850,0,0,1,42.4,0);-webkit-text-stroke:0.35px #f2f2f2">Alaa Amer</div>
<div style="left:425.09px;top:239.3px;width:40.31px;height:10.3px;background:rgba(0,0,0,0.3)"></div>
<svg style="left:456.9px;top:240.4px;" width="6" height="8" viewBox="0 0 6 8"><rect x="1.8" y="0.8" width="2.6" height="4.4" rx="1.3" fill="#c42c3c"/><g fill="none" stroke="#b82838" stroke-width="1"><path d="M0.8 3.6C0.8 6 5.2 6 5.2 3.6M3 6V7.6"/><path d="M0.5 0.6L5.5 7.6"/></g></svg>
<div class="t" style="left:427.09px;top:241.33px;width:39.91px;font-size:8px;line-height:8px;color:#e6e6e6;transform:matrix(-0.7400,0,0,1,27.31,0);">Alaa Amer</div>
<div style="left:468.4px;top:158.3px;width:133.2px;height:91.3px;background:#232323"></div>
<div class="t" style="left:496.36px;top:198.64px;width:101.45px;font-size:11px;line-height:11px;color:#f2f2f2;font-weight:700;transform:matrix(-0.7850,0,0,1,77.29,0);-webkit-text-stroke:0.35px #f2f2f2">Dr. Esra Bayrakdar</div>
<div style="left:538.59px;top:239.3px;width:63.01px;height:10.3px;background:rgba(0,0,0,0.3)"></div>
<svg style="left:593.1px;top:240.4px;" width="6" height="8" viewBox="0 0 6 8"><rect x="1.8" y="0.8" width="2.6" height="4.4" rx="1.3" fill="#c42c3c"/><g fill="none" stroke="#b82838" stroke-width="1"><path d="M0.8 3.6C0.8 6 5.2 6 5.2 3.6M3 6V7.6"/><path d="M0.5 0.6L5.5 7.6"/></g></svg>
<div class="t" style="left:540.59px;top:241.33px;width:70.58px;font-size:8px;line-height:8px;color:#e6e6e6;transform:matrix(-0.7400,0,0,1,50.01,0);">Dr. Esra Bayrakdar</div>
<div style="left:604.6px;top:158.3px;width:133.2px;height:91.3px;background:#232323"></div>
<div class="t" style="left:634.49px;top:198.64px;width:96.52px;font-size:11px;line-height:11px;color:#f2f2f2;font-weight:700;transform:matrix(-0.7850,0,0,1,73.41,0);-webkit-text-stroke:0.35px #f2f2f2">Dr Mahendran S...</div>
<div style="left:671.49px;top:239.3px;width:66.31px;height:10.3px;background:rgba(0,0,0,0.3)"></div>
<svg style="left:729.3px;top:240.4px;" width="6" height="8" viewBox="0 0 6 8"><rect x="1.8" y="0.8" width="2.6" height="4.4" rx="1.3" fill="#c42c3c"/><g fill="none" stroke="#b82838" stroke-width="1"><path d="M0.8 3.6C0.8 6 5.2 6 5.2 3.6M3 6V7.6"/><path d="M0.5 0.6L5.5 7.6"/></g></svg>
<div class="t" style="left:673.49px;top:241.33px;width:75.04px;font-size:8px;line-height:8px;color:#e6e6e6;transform:matrix(-0.7400,0,0,1,53.31,0);">Dr Mahendran Selar</div>
<div style="left:740.8px;top:158.3px;width:133.2px;height:91.3px;background:#232323"></div>
<svg style="left:769.8px;top:158.6px;" width="75.1" height="90.5" viewBox="0 0 75 90"><defs><filter id="bm" x="-10%" y="-10%" width="120%" height="120%"><feGaussianBlur stdDeviation="0.6"/></filter><radialGradient id="fg" cx="0.5" cy="0.45" r="0.6"><stop offset="0" stop-color="#dab6a2"/><stop offset="0.7" stop-color="#c9a08c"/><stop offset="1" stop-color="#b08470"/></radialGradient></defs><g filter="url(#bm)"><rect x="-5" y="-5" width="85" height="100" fill="#f3f3f1"/><path d="M-5 95V78C6 75 14 73 22 72L30 68H50L56 62C62 66 70 70 80 75V95Z" fill="#1d1f2b"/><path d="M24 70L33 95H46L54 66L48 62H30Z" fill="#f2e8ea"/><path d="M30 82L35 80L40 82L39 95H30Z" fill="#85202c"/><path d="M27 58C28 66 33 72 40 72C48 72 53 66 54 58Z" fill="#b88e7a"/><path d="M21 36C20 56 28 71 39.5 71C51 71 59 56 58 36C58 21 51 13 39.5 13C28 13 21 21 21 36Z" fill="url(#fg)"/><ellipse cx="20.5" cy="41" rx="2.6" ry="6" fill="#b88c78"/><ellipse cx="58.5" cy="41" rx="2.6" ry="6" fill="#b88c78"/><path d="M18.5 38C16 20 24 4 40 3.5C56 4 62 20 60 38L57.5 31C56 22 52 16 40 15C28 16 23 22 21.5 31Z" fill="#4f4d4e"/><path d="M24 32C29 30 33 30 36 32M43 32C46 30 51 30 56 32" stroke="#3a2c28" stroke-width="2" fill="none"/><ellipse cx="30.5" cy="36.5" rx="3.4" ry="1.5" fill="#4a3a34"/><ellipse cx="48.5" cy="36.5" rx="3.4" ry="1.5" fill="#4a3a34"/><path d="M38 38L36.5 48C38.5 49.5 41.5 49.5 43.5 48L42 38Z" fill="#bc8e7a" opacity="0.5"/><path d="M30 55C34 51 44 51 48 55L46 57C42 55 36 55 32 57Z" fill="#3c2822"/><path d="M34 59.5C37 60.5 42 60.5 45 59.5" stroke="#9c6a5c" stroke-width="1" fill="none"/></g></svg>
<div style="left:809.67px;top:239.3px;width:64.33px;height:10.3px;background:rgba(0,0,0,0.3)"></div>
<svg style="left:865.5px;top:240.4px;" width="6" height="8" viewBox="0 0 6 8"><rect x="1.8" y="0.8" width="2.6" height="4.4" rx="1.3" fill="#c42c3c"/><g fill="none" stroke="#b82838" stroke-width="1"><path d="M0.8 3.6C0.8 6 5.2 6 5.2 3.6M3 6V7.6"/><path d="M0.5 0.6L5.5 7.6"/></g></svg>
<div class="t" style="left:811.67px;top:241.33px;width:72.37px;font-size:8px;line-height:8px;color:#e6e6e6;transform:matrix(-0.7400,0,0,1,51.33,0);">Muhammad Ahmed</div>
<div style="left:196px;top:252.6px;width:133.2px;height:91.3px;background:#232323"></div>
<div class="t" style="left:224.21px;top:292.94px;width:100.81px;font-size:11px;line-height:11px;color:#f2f2f2;font-weight:700;transform:matrix(-0.7850,0,0,1,76.78,0);-webkit-text-stroke:0.35px #f2f2f2">Zy biher pharmacy</div>
<div style="left:267.18px;top:333.6px;width:62.02px;height:10.3px;background:rgba(0,0,0,0.3)"></div>
<svg style="left:320.7px;top:334.7px;" width="6" height="8" viewBox="0 0 6 8"><rect x="1.8" y="0.8" width="2.6" height="4.4" rx="1.3" fill="#c42c3c"/><g fill="none" stroke="#b82838" stroke-width="1"><path d="M0.8 3.6C0.8 6 5.2 6 5.2 3.6M3 6V7.6"/><path d="M0.5 0.6L5.5 7.6"/></g></svg>
<div class="t" style="left:269.18px;top:335.63px;width:69.25px;font-size:8px;line-height:8px;color:#e6e6e6;transform:matrix(-0.7400,0,0,1,49.02,0);">Zy biher pharmacy</div>
<div style="left:332.2px;top:252.6px;width:133.2px;height:91.3px;background:#232323"></div>
<div style="left:376.2px;top:271.2px;width:45.3px;height:54px;background:#c8185f"></div>
<div class="t" style="left:392.3px;top:284px;width:24.67px;font-size:30px;line-height:30px;color:#fde8f0;transform:matrix(-0.6370,0,0,1,13.8,0);font-weight:300">R</div>
<div style="left:397.45px;top:333.6px;width:67.95px;height:10.3px;background:rgba(0,0,0,0.3)"></div>
<svg style="left:456.9px;top:334.7px;" width="6" height="8" viewBox="0 0 6 8"><rect x="1.8" y="0.8" width="2.6" height="4.4" rx="1.3" fill="#c42c3c"/><g fill="none" stroke="#b82838" stroke-width="1"><path d="M0.8 3.6C0.8 6 5.2 6 5.2 3.6M3 6V7.6"/><path d="M0.5 0.6L5.5 7.6"/></g></svg>
<div class="t" style="left:399.45px;top:335.63px;width:77.25px;font-size:8px;line-height:8px;color:#e6e6e6;transform:matrix(-0.7400,0,0,1,54.95,0);">R. Jothilakshmi biher</div>
<div style="left:468.4px;top:252.6px;width:133.2px;height:91.3px;background:#232323"></div>
<div style="left:512.5px;top:271.1px;width:45px;height:54.4px;background:#cb3d0c"></div>
<div class="t" style="left:528.6px;top:284.81px;width:19.69px;font-size:30px;line-height:30px;color:#fff1e8;transform:matrix(-0.6952,0,0,1,11.6,0);">d</div>
<div style="left:556.79px;top:333.6px;width:44.81px;height:10.3px;background:rgba(0,0,0,0.3)"></div>
<div class="t" style="left:558.79px;top:335.63px;width:58.15px;font-size:8px;line-height:8px;color:#e6e6e6;transform:matrix(-0.7400,0,0,1,40.81,0);">dean pharmacy</div>
<div style="left:604.6px;top:252.6px;width:133.2px;height:91.3px;background:#232323"></div>
<div class="t" style="left:634.66px;top:292.94px;width:96.1px;font-size:11px;line-height:11px;color:#f2f2f2;font-weight:700;transform:matrix(-0.7850,0,0,1,73.09,0);-webkit-text-stroke:0.35px #f2f2f2">Omar Abdulwah...</div>
<div style="left:657.66px;top:333.6px;width:80.14px;height:10.3px;background:rgba(0,0,0,0.3)"></div>
<svg style="left:729.3px;top:334.7px;" width="6" height="8" viewBox="0 0 6 8"><rect x="1.8" y="0.8" width="2.6" height="4.4" rx="1.3" fill="#c42c3c"/><g fill="none" stroke="#b82838" stroke-width="1"><path d="M0.8 3.6C0.8 6 5.2 6 5.2 3.6M3 6V7.6"/><path d="M0.5 0.6L5.5 7.6"/></g></svg>
<div class="t" style="left:659.66px;top:335.63px;width:93.73px;font-size:8px;line-height:8px;color:#e6e6e6;transform:matrix(-0.7400,0,0,1,67.14,0);">Omar Abdulwahab Khalaf</div>
<div style="left:740.8px;top:252.6px;width:133.2px;height:91.3px;background:#232323"></div>
<div class="t" style="left:775.49px;top:292.94px;width:84.3px;font-size:11px;line-height:11px;color:#f2f2f2;font-weight:700;transform:matrix(-0.7850,0,0,1,63.82,0);-webkit-text-stroke:0.35px #f2f2f2">Dr. Omji Porwal</div>
<div style="left:819.88px;top:333.6px;width:54.12px;height:10.3px;background:rgba(0,0,0,0.3)"></div>
<svg style="left:865.5px;top:334.7px;" width="6" height="8" viewBox="0 0 6 8"><rect x="1.8" y="0.8" width="2.6" height="4.4" rx="1.3" fill="#c42c3c"/><g fill="none" stroke="#b82838" stroke-width="1"><path d="M0.8 3.6C0.8 6 5.2 6 5.2 3.6M3 6V7.6"/><path d="M0.5 0.6L5.5 7.6"/></g></svg>
<div class="t" style="left:821.88px;top:335.63px;width:58.56px;font-size:8px;line-height:8px;color:#e6e6e6;transform:matrix(-0.7400,0,0,1,41.12,0);">Dr. Omji Porwal</div>
<div style="left:196px;top:346.9px;width:133.2px;height:91.3px;background:#232323"></div>
<svg style="left:225.1px;top:347.3px;" width="75.1" height="90.8" viewBox="0 0 75 91"><defs><filter id="bw" x="-10%" y="-10%" width="120%" height="120%"><feGaussianBlur stdDeviation="0.7"/></filter></defs><g filter="url(#bw)"><rect x="-5" y="-5" width="85" height="101" fill="#e6d0b8"/><path d="M-5 -5H28V70H-5Z" fill="#e9d6c2"/><path d="M-5 42L5 40V74L-5 76Z" fill="#946040"/><path d="M26 -5H62V20L44 26Z" fill="#8a6550"/><path d="M54 -5H80V26L58 30Z" fill="#2a2220"/><path d="M58 8C62 4 70 6 72 14L74 30H60Z" fill="#3c3430"/><path d="M50 30L80 20V48L56 46Z" fill="#e4d8c8"/><path d="M-5 72L18 70L20 96H-5Z" fill="#ece2d4"/><path d="M16 52C13 32 17 9 31 4C44 1 52 12 54 28C60 34 67 40 66 48C64 58 56 68 44 71C30 73 18 67 16 52Z" fill="#ae927a"/><path d="M21 30C21 19 26 14 32 15C39 16 43 22 43 31C43 42 39 49 33 49C26 49 21 41 21 30Z" fill="#e4c0a6"/><ellipse cx="26.5" cy="28.5" rx="2.8" ry="1.3" fill="#3a2820"/><ellipse cx="36.5" cy="27.5" rx="2.8" ry="1.3" fill="#3a2820"/><path d="M23.5 25.5C25.5 24.5 28 24.5 30 25.5M33.5 24.5C35.5 23.5 38 23.5 40 24.5" stroke="#6a4a3a" stroke-width="0.9" fill="none"/><path d="M30 41.5C32 40.5 35 40.5 37 41.5" stroke="#b05854" stroke-width="2" fill="none"/><path d="M16 72C22 67 32 66 42 63L41 96H15Z" fill="#d8682e"/><path d="M54 40C62 38 72 40 80 42V96H54Z" fill="#d96a30"/><path d="M40 62L56 56L58 96H40Z" fill="#f4f0ea"/><path d="M16 50C22 64 40 68 56 54C60 50 62 46 61 42C66 46 66 52 62 58C56 66 46 71 34 71C24 71 18 64 16 56Z" fill="#a88c74"/></g></svg>
<div style="left:280.77px;top:427.9px;width:48.43px;height:10.3px;background:rgba(0,0,0,0.3)"></div>
<svg style="left:320.7px;top:429px;" width="6" height="8" viewBox="0 0 6 8"><rect x="1.8" y="0.8" width="2.6" height="4.4" rx="1.3" fill="#c42c3c"/><g fill="none" stroke="#b82838" stroke-width="1"><path d="M0.8 3.6C0.8 6 5.2 6 5.2 3.6M3 6V7.6"/><path d="M0.5 0.6L5.5 7.6"/></g></svg>
<div class="t" style="left:282.77px;top:429.93px;width:50.88px;font-size:8px;line-height:8px;color:#e6e6e6;transform:matrix(-0.7400,0,0,1,35.43,0);">Amani Tahsin</div>
<div style="left:332.2px;top:346.9px;width:133.2px;height:91.3px;background:#232323"></div>
<div class="t" style="left:379.13px;top:387.24px;width:53.12px;font-size:11px;line-height:11px;color:#f2f2f2;font-weight:700;transform:matrix(-0.7850,0,0,1,39.35,0);-webkit-text-stroke:0.35px #f2f2f2">Dr Kumar</div>
<div style="left:427.07px;top:427.9px;width:38.33px;height:10.3px;background:rgba(0,0,0,0.3)"></div>
<svg style="left:456.9px;top:429px;" width="6" height="8" viewBox="0 0 6 8"><rect x="1.8" y="0.8" width="2.6" height="4.4" rx="1.3" fill="#c42c3c"/><g fill="none" stroke="#b82838" stroke-width="1"><path d="M0.8 3.6C0.8 6 5.2 6 5.2 3.6M3 6V7.6"/><path d="M0.5 0.6L5.5 7.6"/></g></svg>
<div class="t" style="left:429.07px;top:429.93px;width:37.23px;font-size:8px;line-height:8px;color:#e6e6e6;transform:matrix(-0.7400,0,0,1,25.33,0);">Dr Kumar</div>
<div style="left:468.4px;top:346.9px;width:133.2px;height:91.3px;background:#232323"></div>
<div class="t" style="left:498.28px;top:387.24px;width:96.54px;font-size:11px;line-height:11px;color:#f2f2f2;font-weight:700;transform:matrix(-0.7850,0,0,1,73.43,0);-webkit-text-stroke:0.35px #f2f2f2">Dr Shehla Nasar...</div>
<div style="left:507.33px;top:427.9px;width:94.27px;height:10.3px;background:rgba(0,0,0,0.3)"></div>
<svg style="left:593.1px;top:429px;" width="6" height="8" viewBox="0 0 6 8"><rect x="1.8" y="0.8" width="2.6" height="4.4" rx="1.3" fill="#c42c3c"/><g fill="none" stroke="#b82838" stroke-width="1"><path d="M0.8 3.6C0.8 6 5.2 6 5.2 3.6M3 6V7.6"/><path d="M0.5 0.6L5.5 7.6"/></g></svg>
<div class="t" style="left:509.33px;top:429.93px;width:112.82px;font-size:8px;line-height:8px;color:#e6e6e6;transform:matrix(-0.7400,0,0,1,81.27,0);">Dr Shehla Nasar Mir Najibullah</div>
<div style="left:604.6px;top:346.9px;width:133.2px;height:91.3px;background:#232323"></div>
<div class="t" style="left:637.12px;top:387.24px;width:89.84px;font-size:11px;line-height:11px;color:#f2f2f2;font-weight:700;transform:matrix(-0.7850,0,0,1,68.17,0);-webkit-text-stroke:0.35px #f2f2f2">N. Jayaramakani</div>
<div style="left:680.38px;top:427.9px;width:57.42px;height:10.3px;background:rgba(0,0,0,0.3)"></div>
<svg style="left:729.3px;top:429px;" width="6" height="8" viewBox="0 0 6 8"><rect x="1.8" y="0.8" width="2.6" height="4.4" rx="1.3" fill="#c42c3c"/><g fill="none" stroke="#b82838" stroke-width="1"><path d="M0.8 3.6C0.8 6 5.2 6 5.2 3.6M3 6V7.6"/><path d="M0.5 0.6L5.5 7.6"/></g></svg>
<div class="t" style="left:682.38px;top:429.93px;width:63.02px;font-size:8px;line-height:8px;color:#e6e6e6;transform:matrix(-0.7400,0,0,1,44.42,0);">N. Jayaramakani</div>
<div style="left:740.8px;top:346.9px;width:133.2px;height:91.3px;background:#232323"></div>
<div class="t" style="left:769.8px;top:387.24px;width:98.79px;font-size:11px;line-height:11px;color:#f2f2f2;font-weight:700;transform:matrix(-0.7850,0,0,1,75.19,0);-webkit-text-stroke:0.35px #f2f2f2">Vijayalakshmi M K</div>
<div style="left:821.75px;top:427.9px;width:52.25px;height:10.3px;background:rgba(0,0,0,0.3)"></div>
<div class="t" style="left:823.75px;top:429.93px;width:68.21px;font-size:8px;line-height:8px;color:#e6e6e6;transform:matrix(-0.7400,0,0,1,48.25,0);">Vijayalakshmi M K</div>
<div style="left:196px;top:441.2px;width:133.2px;height:91.3px;background:#232323"></div>
<div class="t" style="left:226.85px;top:481.54px;width:94.07px;font-size:11px;line-height:11px;color:#f2f2f2;font-weight:700;transform:matrix(-0.7850,0,0,1,71.49,0);-webkit-text-stroke:0.35px #f2f2f2">Swsan's Galaxy...</div>
<div style="left:262.42px;top:522.2px;width:66.78px;height:10.3px;background:rgba(0,0,0,0.3)"></div>
<svg style="left:320.7px;top:523.3px;" width="6" height="8" viewBox="0 0 6 8"><rect x="1.8" y="0.8" width="2.6" height="4.4" rx="1.3" fill="#c42c3c"/><g fill="none" stroke="#b82838" stroke-width="1"><path d="M0.8 3.6C0.8 6 5.2 6 5.2 3.6M3 6V7.6"/><path d="M0.5 0.6L5.5 7.6"/></g></svg>
<div class="t" style="left:264.42px;top:524.23px;width:75.68px;font-size:8px;line-height:8px;color:#e6e6e6;transform:matrix(-0.7400,0,0,1,53.78,0);">Swsan's Galaxy A71</div>
<div style="left:332.2px;top:441.2px;width:133.2px;height:91.3px;background:#232323"></div>
<div class="t" style="left:369.77px;top:481.54px;width:76.97px;font-size:11px;line-height:11px;color:#f2f2f2;font-weight:700;transform:matrix(-0.7850,0,0,1,58.06,0);-webkit-text-stroke:0.35px #f2f2f2">Dlanpar Djwar</div>
<div style="left:414.89px;top:522.2px;width:50.51px;height:10.3px;background:rgba(0,0,0,0.3)"></div>
<svg style="left:456.9px;top:523.3px;" width="6" height="8" viewBox="0 0 6 8"><rect x="1.8" y="0.8" width="2.6" height="4.4" rx="1.3" fill="#c42c3c"/><g fill="none" stroke="#b82838" stroke-width="1"><path d="M0.8 3.6C0.8 6 5.2 6 5.2 3.6M3 6V7.6"/><path d="M0.5 0.6L5.5 7.6"/></g></svg>
<div class="t" style="left:416.89px;top:524.23px;width:53.69px;font-size:8px;line-height:8px;color:#e6e6e6;transform:matrix(-0.7400,0,0,1,37.51,0);">Dlanpar Djwar</div>
<div style="left:468.4px;top:441.2px;width:133.2px;height:91.3px;background:#232323"></div>
<div class="t" style="left:504.77px;top:481.54px;width:80.02px;font-size:11px;line-height:11px;color:#f2f2f2;font-weight:700;transform:matrix(-0.7850,0,0,1,60.46,0);-webkit-text-stroke:0.35px #f2f2f2">Ahmad Hamdy</div>
<div style="left:549.45px;top:522.2px;width:52.15px;height:10.3px;background:rgba(0,0,0,0.3)"></div>
<svg style="left:593.1px;top:523.3px;" width="6" height="8" viewBox="0 0 6 8"><rect x="1.8" y="0.8" width="2.6" height="4.4" rx="1.3" fill="#c42c3c"/><g fill="none" stroke="#b82838" stroke-width="1"><path d="M0.8 3.6C0.8 6 5.2 6 5.2 3.6M3 6V7.6"/><path d="M0.5 0.6L5.5 7.6"/></g></svg>
<div class="t" style="left:551.45px;top:524.23px;width:55.91px;font-size:8px;line-height:8px;color:#e6e6e6;transform:matrix(-0.7400,0,0,1,39.15,0);">Ahmad Hamdy</div>
<div style="left:604.6px;top:441.2px;width:133.2px;height:91.3px;background:#232323"></div>
<div class="t" style="left:632.4px;top:481.54px;width:101.86px;font-size:11px;line-height:11px;color:#f2f2f2;font-weight:700;transform:matrix(-0.7850,0,0,1,77.6,0);-webkit-text-stroke:0.35px #f2f2f2">Saya Ameer Arsa...</div>
<div style="left:671.16px;top:522.2px;width:66.64px;height:10.3px;background:rgba(0,0,0,0.3)"></div>
<svg style="left:729.3px;top:523.3px;" width="6" height="8" viewBox="0 0 6 8"><rect x="1.8" y="0.8" width="2.6" height="4.4" rx="1.3" fill="#c42c3c"/><g fill="none" stroke="#b82838" stroke-width="1"><path d="M0.8 3.6C0.8 6 5.2 6 5.2 3.6M3 6V7.6"/><path d="M0.5 0.6L5.5 7.6"/></g></svg>
<div class="t" style="left:673.16px;top:524.23px;width:75.49px;font-size:8px;line-height:8px;color:#e6e6e6;transform:matrix(-0.7400,0,0,1,53.64,0);">Saya Ameer Arsalan</div>
<div style="left:740.8px;top:441.2px;width:133.2px;height:91.3px;background:#232323"></div>
<div class="t" style="left:788.12px;top:481.54px;width:52.11px;font-size:11px;line-height:11px;color:#f2f2f2;font-weight:700;transform:matrix(-0.7850,0,0,1,38.55,0);-webkit-text-stroke:0.35px #f2f2f2">Israa Adil</div>
<div style="left:836.65px;top:522.2px;width:37.35px;height:10.3px;background:rgba(0,0,0,0.3)"></div>
<svg style="left:865.5px;top:523.3px;" width="6" height="8" viewBox="0 0 6 8"><rect x="1.8" y="0.8" width="2.6" height="4.4" rx="1.3" fill="#c42c3c"/><g fill="none" stroke="#b82838" stroke-width="1"><path d="M0.8 3.6C0.8 6 5.2 6 5.2 3.6M3 6V7.6"/><path d="M0.5 0.6L5.5 7.6"/></g></svg>
<div class="t" style="left:838.65px;top:524.23px;width:35.91px;font-size:8px;line-height:8px;color:#e6e6e6;transform:matrix(-0.7400,0,0,1,24.35,0);">Israa Adil</div>
<div style="left:738.4px;top:156px;width:137.5px;height:95.4px;box-sizing:border-box;border:2.4px solid #d3dc96"></div>
<div style="left:180px;top:274px;width:26px;height:49px;background:rgba(16,16,16,0.8)"></div>
<svg style="left:187.7px;top:290.5px;" width="9" height="16.3" viewBox="0 0 9 16.3"><path d="M9 0V16.3L0 8.15Z" fill="#4bb6ee"/></svg>
<div class="t" style="left:188.8px;top:313.3px;width:12.04px;font-size:6.5px;line-height:6.5px;color:#bbb;transform:matrix(-0.8853,0,0,1,8,0);">1/2</div>
<div style="left:862.8px;top:273.3px;width:17.3px;height:49.5px;background:rgba(16,16,16,0.8)"></div>
<svg style="left:872.6px;top:290px;" width="8.7" height="15.5" viewBox="0 0 8.7 15.5"><path d="M0 0V15.5L8.7 7.75Z" fill="#bdbdbd"/></svg>
<div class="t" style="left:871.45px;top:313.3px;width:12.04px;font-size:6.5px;line-height:6.5px;color:#bbb;transform:matrix(-0.8300,0,0,1,7.5,0);">1/2</div>
<div style="left:185px;top:562px;width:28px;height:15px;background:#cf2829;border-radius:3px"></div>
<div class="t" style="left:194px;top:565.67px;width:16.22px;font-size:7px;line-height:7px;color:#fff;font-weight:700;transform:matrix(-0.7564,0,0,1,10,0);">End</div>
<div class="t" style="left:302px;top:573.57px;width:18.95px;font-size:7px;line-height:7px;color:#cfcfcf;transform:matrix(-0.8653,0,0,1,13.8,0);">More</div>
<div style="left:303.8px;top:563.2px;width:2px;height:2px;border-radius:50%;background:#d8d8d8"></div>
<div style="left:308.2px;top:563.2px;width:2px;height:2px;border-radius:50%;background:#d8d8d8"></div>
<div style="left:312.6px;top:563.2px;width:2px;height:2px;border-radius:50%;background:#d8d8d8"></div>
<div class="t" style="left:334px;top:573.57px;width:34.13px;font-size:7px;line-height:7px;color:#cfcfcf;transform:matrix(-0.7806,0,0,1,24.3,0);">Reactions</div>
<svg style="left:339.5px;top:557.5px;" width="12" height="12" viewBox="0 0 12 12"><circle cx="6" cy="7" r="4.6" fill="#d9d9d9"/><circle cx="4.5" cy="6" r="0.7" fill="#333"/><circle cx="7.5" cy="6" r="0.7" fill="#333"/><path d="M3.8 8C5 9.5 7 9.5 8.2 8" fill="none" stroke="#333" stroke-width="0.8"/><path d="M2 0.5V3.5M0.5 2H3.5" stroke="#d9d9d9" stroke-width="1"/></svg>
<div class="t" style="left:368.2px;top:573.57px;width:55.14px;font-size:7px;line-height:7px;color:#cfcfcf;transform:matrix(-0.7730,0,0,1,40.3,0);">Breakout Rooms</div>
<svg style="left:382.6px;top:558.4px;" width="11.4" height="11.3" viewBox="0 0 11.4 11.3"><g fill="#d9d9d9"><rect x="0" y="0" width="5.2" height="5.1" rx="0.8"/><rect x="6.2" y="0" width="5.2" height="5.1" rx="0.8"/><rect x="0" y="6.2" width="5.2" height="5.1" rx="0.8"/><rect x="6.2" y="6.2" width="5.2" height="5.1" rx="0.8"/></g></svg>
<div class="t" style="left:416.3px;top:573.57px;width:48.52px;font-size:7px;line-height:7px;color:#cfcfcf;transform:matrix(-0.7667,0,0,1,34.9,0);">Live Transcript</div>
<svg style="left:427.7px;top:559px;" width="12.2" height="9.5" viewBox="0 0 12.2 9.5"><rect width="12.2" height="9.5" rx="1.5" fill="#d9d9d9"/><text x="6.1" y="6.8" font-size="5.5" font-family="Liberation Sans" font-weight="700" text-anchor="middle" fill="#333" transform="translate(12.2,0) scale(-1,1)">CC</text></svg>
<div class="t" style="left:458.2px;top:573.57px;width:73.05px;font-size:7px;line-height:7px;color:#cfcfcf;transform:matrix(-0.7838,0,0,1,54.9,0);">Pause/Stop Recording</div>
<svg style="left:474.7px;top:557.2px;" width="21" height="11.3" viewBox="0 0 21 11.3"><rect x="0" y="0" width="10.2" height="11.3" rx="1.2" fill="#d9d9d9"/><rect x="3.3" y="3.3" width="3.6" height="4.6" fill="#222"/><rect x="11.3" y="0" width="9.7" height="11.3" rx="1.2" fill="#d9d9d9"/><rect x="13.8" y="3" width="1.6" height="5.4" fill="#222"/><rect x="16.7" y="3" width="1.6" height="5.4" fill="#222"/></svg>
<svg style="left:520.2px;top:562.4px;" width="5" height="3" viewBox="0 0 5 3"><path d="M0.5 2.6L2.5 0.6L4.5 2.6" fill="none" stroke="#bbb" stroke-width="0.9"/></svg>
<div class="t" style="left:523.6px;top:573.57px;width:45.8px;font-size:7px;line-height:7px;color:#2dbb55;transform:matrix(-0.7336,0,0,1,31.4,0);">Share Screen</div>
<svg style="left:534px;top:559px;" width="10.5" height="9.5" viewBox="0 0 10.5 9.5"><rect width="10.5" height="9.5" rx="1.5" fill="#23c552"/><path d="M5.25 2V7.5M3 4.2L5.25 2L7.5 4.2" fill="none" stroke="#0a3a14" stroke-width="1.1"/></svg>
<svg style="left:565.3px;top:562.9px;" width="5" height="3" viewBox="0 0 5 3"><path d="M0.5 2.6L2.5 0.6L4.5 2.6" fill="none" stroke="#bbb" stroke-width="0.9"/></svg>
<div class="t" style="left:576.7px;top:573.57px;width:17.79px;font-size:7px;line-height:7px;color:#cfcfcf;transform:matrix(-0.7980,0,0,1,11.8,0);">Chat</div>
<svg style="left:577.6px;top:558.8px;" width="11" height="11" viewBox="0 0 11 11"><path d="M1.5 0.5H9.5C10.2 0.5 10.6 1 10.6 1.6V7C10.6 7.6 10.2 8 9.5 8V10.5L7 8H1.5C0.8 8 0.4 7.6 0.4 7V1.6C0.4 1 0.8 0.5 1.5 0.5Z" fill="#d9d9d9"/></svg>
<div class="t" style="left:617px;top:573.57px;width:18.17px;font-size:7px;line-height:7px;color:#cfcfcf;transform:matrix(-0.7777,0,0,1,11.8,0);">Polls</div>
<svg style="left:618px;top:559.8px;" width="9" height="9.8" viewBox="0 0 9 9.8"><g fill="#d9d9d9"><rect x="0" y="5" width="2.2" height="4.8"/><rect x="3.4" y="0" width="2.2" height="9.8"/><rect x="6.8" y="3" width="2.2" height="6.8"/></g></svg>
<svg style="left:643.5px;top:562.9px;" width="5" height="3" viewBox="0 0 5 3"><path d="M0.5 2.6L2.5 0.6L4.5 2.6" fill="none" stroke="#bbb" stroke-width="0.9"/></svg>
<div class="t" style="left:656.4px;top:573.57px;width:39.57px;font-size:7px;line-height:7px;color:#cfcfcf;transform:matrix(-0.8066,0,0,1,29.5,0);">Participants</div>
<div class="t" style="left:656.4px;top:560px;width:10.23px;font-size:6.5px;line-height:6.5px;color:#cfcfcf;transform:matrix(-0.9543,0,0,1,6.9,0);">29</div>
<svg style="left:665.2px;top:559.5px;" width="12" height="10" viewBox="0 0 12 10"><g fill="#d9d9d9"><circle cx="3.5" cy="2.6" r="2.3"/><path d="M0 9.8C0 6.5 1.5 5.5 3.5 5.5C5.5 5.5 7 6.5 7 9.8Z"/><circle cx="8.8" cy="2.6" r="2.3"/><path d="M5.3 9.8C5.3 6.5 6.8 5.5 8.8 5.5C10.8 5.5 12 6.5 12 9.8Z"/></g></svg>
<div class="t" style="left:709.6px;top:573.57px;width:28.29px;font-size:7px;line-height:7px;color:#cfcfcf;transform:matrix(-0.7988,0,0,1,20.2,0);">Security</div>
<svg style="left:714.9px;top:559.9px;" width="9.5" height="10.6" viewBox="0 0 9.5 10.6"><path d="M4.75 0.3L9.2 1.8V5C9.2 7.8 7 9.6 4.75 10.3C2.5 9.6 0.3 7.8 0.3 5V1.8Z" fill="#d9d9d9"/><path d="M4.75 0.3V10.3C7 9.6 9.2 7.8 9.2 5V5.3H4.75M4.75 5.3H0.3" fill="#333" opacity="0.85"/><path d="M0.3 5.3H4.75V0.3L0.3 1.8Z" fill="#d9d9d9"/></svg>
<svg style="left:805.9px;top:562.2px;" width="5" height="3" viewBox="0 0 5 3"><path d="M0.5 2.6L2.5 0.6L4.5 2.6" fill="none" stroke="#bbb" stroke-width="0.9"/></svg>
<div class="t" style="left:811.6px;top:573.57px;width:37.51px;font-size:7px;line-height:7px;color:#cfcfcf;transform:matrix(-0.8317,0,0,1,28.7,0);">Start Video</div>
<svg style="left:819px;top:557.8px;" width="13" height="13.8" viewBox="0 0 13 13.8"><rect x="3.6" y="3.8" width="9" height="7.2" rx="1" fill="#cfcfcf"/><path d="M0.3 4.6L3 6.2V8.6L0.3 10.2Z" fill="#cfcfcf"/><path d="M1.5 0.8L12 13" stroke="#1a1a1a" stroke-width="2.2"/><path d="M1.5 0.8L12 13" stroke="#d33a3a" stroke-width="1.2"/></svg>
<svg style="left:850.5px;top:562.2px;" width="5" height="3" viewBox="0 0 5 3"><path d="M0.5 2.6L2.5 0.6L4.5 2.6" fill="none" stroke="#bbb" stroke-width="0.9"/></svg>
<div class="t" style="left:859.4px;top:573.57px;width:27.51px;font-size:7px;line-height:7px;color:#cfcfcf;transform:matrix(-0.8241,0,0,1,20.2,0);">Unmute</div>
<svg style="left:862.6px;top:557.8px;" width="14.9" height="13.8" viewBox="0 0 14.9 13.8"><rect x="5.5" y="1.5" width="4" height="7" rx="2" fill="#cfcfcf"/><path d="M4 6.5C4 10 11 10 11 6.5M7.5 9.8V12.5" fill="none" stroke="#cfcfcf" stroke-width="1.1"/><path d="M2.5 0.8L13 13" stroke="#d33a3a" stroke-width="1.3"/></svg>
<div style="left:709px;top:585px;width:158.5px;height:22px;background:#fff"></div>
<div class="t" style="left:788.9px;top:591.58px;width:82.55px;font-size:9px;line-height:9px;color:#222;transform:matrix(-0.7606,0,0,1,60.5,0);">Type here to search</div>
<svg style="left:854.6px;top:591.5px;" width="8" height="8" viewBox="0 0 8 8"><circle cx="4.6" cy="3.4" r="2.6" fill="none" stroke="#222" stroke-width="1"/><path d="M2.7 5.3L0.6 7.4" stroke="#222" stroke-width="1.1"/></svg>
<svg style="left:873.5px;top:591.5px;" width="9" height="9" viewBox="0 0 9 9"><g fill="#fff"><rect x="0" y="0" width="4.1" height="4.1"/><rect x="4.9" y="0" width="4.1" height="4.1"/><rect x="0" y="4.9" width="4.1" height="4.1"/><rect x="4.9" y="4.9" width="4.1" height="4.1"/></g></svg>
<div style="left:691.5px;top:591px;width:8px;height:8px;border:1.2px solid #fff;border-radius:50%;box-sizing:border-box"></div>
<svg style="left:669.5px;top:591.5px;" width="8" height="8" viewBox="0 0 8 8"><g fill="none" stroke="#fff" stroke-width="1"><rect x="0.5" y="2" width="4.5" height="4"/><path d="M6.5 0.5V7.5M2 0.5H5M2 7.5H5"/></g></svg>
<div style="left:527.7px;top:584.5px;width:21.1px;height:22.5px;background:#3a4b63"></div>
<svg style="left:463.7px;top:589.5px;" width="12" height="12" viewBox="0 0 12 12"><rect x="0.5" y="0.5" width="11" height="11" rx="1" fill="#2f86d6"/><path d="M1 11L5 6L8 9L11 5V11Z" fill="#9fd0ff"/></svg>
<svg style="left:485.3px;top:589.5px;" width="12" height="12" viewBox="0 0 12 12"><path d="M6 0.5L10 10H2Z" fill="#f08a0c"/><path d="M3.5 6.5H8.5M2.8 8.5H9.2" stroke="#fff" stroke-width="0.9"/><rect x="1" y="10" width="10" height="1.8" fill="#f5a030"/></svg>
<svg style="left:509.6px;top:589.5px;" width="12" height="12" viewBox="0 0 12 12"><rect x="0.5" y="0.5" width="11" height="11" rx="1.5" fill="#2c7fd0"/><path d="M7.5 2.5L3.5 6L7.5 9.5Z" fill="#dff0ff"/></svg>
<svg style="left:531.7px;top:589.5px;" width="12" height="12" viewBox="0 0 12 12"><rect x="0.5" y="0.5" width="11" height="11" rx="3" fill="#2d8cff"/><rect x="4.5" y="4" width="5" height="4" rx="0.8" fill="#fff"/><path d="M4.5 5L2.2 3.8V8.2L4.5 7Z" fill="#fff"/></svg>
<svg style="left:554.1px;top:589.5px;" width="12" height="12" viewBox="0 0 12 12"><circle cx="6" cy="6" r="5.5" fill="#db4437"/><path d="M6 6L10.76 8.75A5.5 5.5 0 0 1 1.24 8.75Z" fill="#0f9d58"/><path d="M6 6L1.24 8.75A5.5 5.5 0 0 1 6 0.5V6Z" fill="#f4b400" opacity="0.9"/><circle cx="6" cy="6" r="2.5" fill="#fff"/><circle cx="6" cy="6" r="1.9" fill="#4285f4"/></svg>
<svg style="left:577.1px;top:589.5px;" width="12" height="12" viewBox="0 0 12 12"><rect x="0.5" y="2" width="11" height="8.5" fill="#1f8ad8"/><path d="M0.5 2L6 6.5L11.5 2" fill="none" stroke="#bfe2ff" stroke-width="1"/></svg>
<svg style="left:599.2px;top:589.5px;" width="12" height="12" viewBox="0 0 12 12"><rect x="1" y="3" width="10" height="8.5" rx="1" fill="#e9eef5"/><path d="M4 3V1.5H8V3" fill="none" stroke="#e9eef5" stroke-width="1"/><rect x="3.5" y="5" width="2.2" height="2.2" fill="#f25022"/><rect x="6.3" y="5" width="2.2" height="2.2" fill="#7fba00"/><rect x="3.5" y="7.8" width="2.2" height="2.2" fill="#00a4ef"/><rect x="6.3" y="7.8" width="2.2" height="2.2" fill="#ffb900"/></svg>
<svg style="left:622.2px;top:589.5px;" width="12" height="12" viewBox="0 0 12 12"><path d="M0.5 2.5H5L6 3.5H11.5V10.5H0.5Z" fill="#f2c04a"/><rect x="0.5" y="5" width="11" height="1.2" fill="#e0a82a"/></svg>
<svg style="left:645.1px;top:589.5px;" width="12" height="12" viewBox="0 0 12 12"><circle cx="6" cy="6" r="5.5" fill="#1e9de0"/><path d="M1 7C2 3 8 2 10.5 5.5C9 5 6 5 5.5 7.5C5.3 9.5 7 11 9 10.8C6 12.5 1.5 11 1 7Z" fill="#3ccf72"/></svg>
<div style="left:461.7px;top:605.8px;width:16px;height:1.2px;background:#8fb8e8"></div>
<div style="left:483.3px;top:605.8px;width:16px;height:1.2px;background:#8fb8e8"></div>
<div style="left:507.6px;top:605.8px;width:16px;height:1.2px;background:#8fb8e8"></div>
<div style="left:529.7px;top:605.8px;width:16px;height:1.2px;background:#8fb8e8"></div>
<div style="left:552.1px;top:605.8px;width:16px;height:1.2px;background:#8fb8e8"></div>
<div style="left:620.2px;top:605.8px;width:16px;height:1.2px;background:#8fb8e8"></div>
<div style="left:643.1px;top:605.8px;width:16px;height:1.2px;background:#8fb8e8"></div>
<svg style="left:11px;top:589px;" width="10" height="14" viewBox="0 0 10 14"><rect x="2" y="0.5" width="7.5" height="7" fill="#e6e6e6"/><path d="M3.5 2.5H8M3.5 4.5H8" stroke="#555" stroke-width="0.8"/><circle cx="3.5" cy="10.5" r="2.5" fill="none" stroke="#ddd" stroke-width="0.9"/><text x="3.5" y="12.3" font-size="4.5" fill="#fff" text-anchor="middle" font-family="Liberation Sans">1</text></svg>
<div class="t" style="left:28.5px;top:587.54px;width:31.23px;font-size:6.8px;line-height:6.8px;color:#f4f4f4;transform:matrix(-0.8680,0,0,1,24.5,0);">11:00 AM</div>
<div class="t" style="left:28px;top:597.64px;width:33.25px;font-size:6.8px;line-height:6.8px;color:#f4f4f4;transform:matrix(-0.8264,0,0,1,25,0);">5/18/2022</div>
<svg style="left:57.5px;top:590px;" width="8" height="8" viewBox="0 0 8 8"><path d="M0.5 2.5H2.5L5 0.5V7.5L2.5 5.5H0.5Z" fill="#e6e6e6" transform="translate(8,0) scale(-1,1)"/><path d="M1 2C0 3.5 0 4.5 1 6" fill="none" stroke="#e6e6e6" stroke-width="0.8"/></svg>
<svg style="left:68px;top:590px;" width="9" height="8" viewBox="0 0 9 8"><rect x="2" y="0.5" width="6.5" height="5" fill="none" stroke="#e6e6e6" stroke-width="0.9"/><path d="M5.2 5.5V7.5M3.5 7.5H7" stroke="#e6e6e6" stroke-width="0.9"/><rect x="0" y="0.3" width="2.2" height="2.2" fill="#e6e6e6"/></svg>
<svg style="left:80px;top:589.5px;" width="6" height="10" viewBox="0 0 6 10"><rect x="1.5" y="0.5" width="3" height="6" rx="1.5" fill="#e6e6e6"/><path d="M0.5 5C0.5 7.5 5.5 7.5 5.5 5M3 7.5V9.5" fill="none" stroke="#e6e6e6" stroke-width="0.9"/></svg>
<svg style="left:92px;top:592px;" width="7" height="4.5" viewBox="0 0 7 4.5"><path d="M0.5 4L3.5 1L6.5 4" fill="none" stroke="#e6e6e6" stroke-width="1"/></svg>
<svg style="left:105px;top:589.5px;" width="12" height="10" viewBox="0 0 12 10"><rect x="0.5" y="0.5" width="11" height="9" fill="none" stroke="#ddd" stroke-width="0.9"/><text x="6" y="7.6" font-size="6.5" fill="#eee" text-anchor="middle" font-family="Liberation Sans" font-weight="700" transform="translate(12,0) scale(-1,1)">EN</text></svg>
</div></body></html>
